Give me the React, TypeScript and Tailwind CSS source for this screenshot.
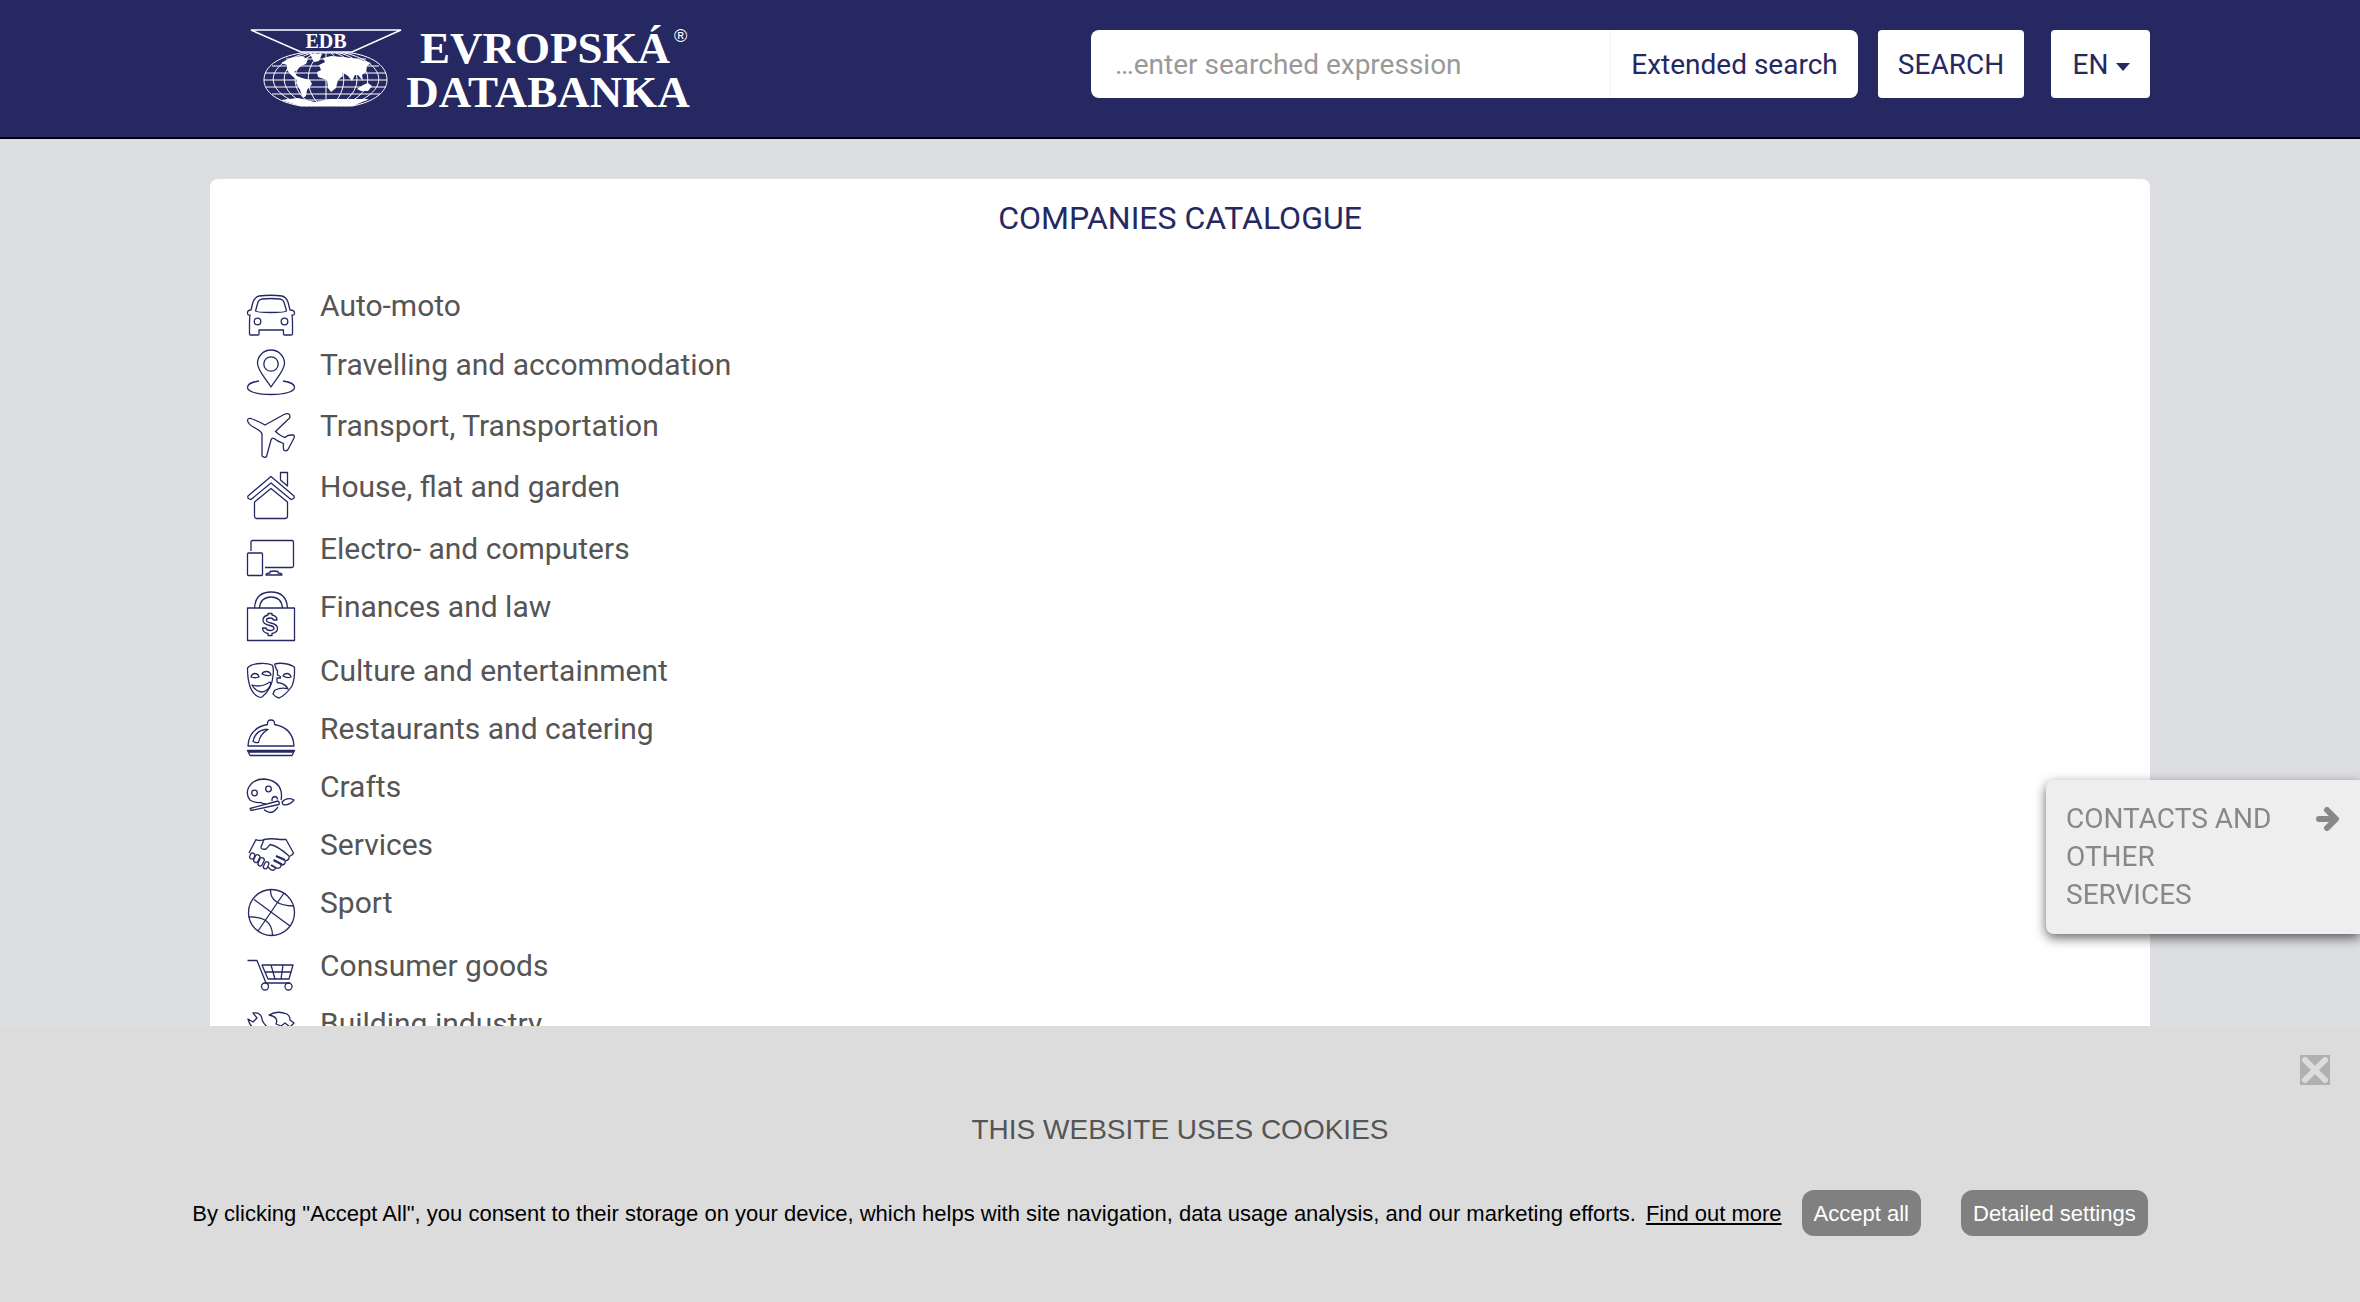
import React from 'react';

type Row = { label: string; height: string; icon: React.ReactNode };

const rows: Row[] = [
  {
    label: 'Auto-moto',
    height: 'h-[59px]',
    icon: (
      <>
        <path d="M4 21 L6 13 Q8 8 12 7 Q24 5.500 35 7 Q39 8 41 13 L43 21 Q47.500 21 47.500 24 Q47.500 26.500 45 26 Q45.500 29 45.500 33 V45 Q45.500 46 44 46 H37.500 Q36.500 46 36.500 45 V41 H12 V45 Q12 46 11 46 H3.500 Q2.500 46 2.500 45 V33 Q2.500 29 3 26 Q0.500 26.500 0.500 24 Q0.500 21 4 21 Z" />
        <path d="M8.500 22 L11 13 Q12 10.500 15 10 Q24 9 33 10 Q36 10.500 37 13 L39.500 22 Q38.500 23.500 24 23.500 Q9.500 23.500 8.500 22 Z" />
        <circle cx="10.500" cy="32.500" r="3.300" />
        <circle cx="37.500" cy="32.500" r="3.300" />
      </>
    ),
  },
  {
    label: 'Travelling and accommodation',
    height: 'h-[61px]',
    icon: (
      <>
        <path d="M24 39 C18 30 10.500 22 10.500 15.500 A13.500 13.500 0 0 1 37.500 15.500 C37.500 22 30 30 24 39 Z" />
        <circle cx="24" cy="16" r="7.200" />
        <path d="M12 33 C4 34 0.500 37 0.500 39.500 C0.500 43.500 10 46.500 24 46.500 C38 46.500 47.500 43.500 47.500 39.500 C47.500 37 44 34 36 33" />
      </>
    ),
  },
  {
    label: 'Transport, Transportation',
    height: 'h-[61px]',
    icon: (
      <path d="M0.500 11.500 Q0.500 9 4 9.500 Q11 12 18 16 L37 5.500 Q43 3 43 8 Q43 9 41 10.500 L28.500 22.500 Q34 27.500 38 28.500 Q40 26.500 43 26 H46.500 Q48 27 47 29 L41 40.500 Q39.500 42.500 37 41.500 Q36 39 36.500 34.500 Q30 32 27 29.500 Q25 28.500 24 31 L19.500 47.500 Q18 49.500 15 47 V25 Q14.500 22.500 9 19.500 Q1 15.500 0.500 11.500 Z" />
    ),
  },
  {
    label: 'House, flat and garden',
    height: 'h-[62px]',
    icon: (
      <>
        <path d="M24 6.500 L47 26 Q48 29 44 29.500 L24 13 L4 29.500 Q0 29 1 26 Z" />
        <path d="M7.500 32 L24 18.500 L40.500 32 V46 Q40.500 48.500 38 48.500 H9.500 Q7.500 48.500 7.500 46 Z" />
        <path d="M33.500 10 V2.500 H40.500 V16 Z" />
      </>
    ),
  },
  {
    label: 'Electro- and computers',
    height: 'h-[58px]',
    icon: (
      <>
        <path d="M4 19 V10 Q4 8.500 6 8.500 H45 Q46.500 8.500 46.500 10 V34 Q46.500 35.500 45 35.500 H18" />
        <rect x="0.500" y="21" width="15" height="22.500" rx="1" />
        <path d="M19 43 Q19 41 23 41 V39.500 Q27 38.500 31 39.500 V41 Q35 41 35 43 Z" />
      </>
    ),
  },
  {
    label: 'Finances and law',
    height: 'h-[64px]',
    icon: (
      <>
        <rect x="0.500" y="18" width="47" height="32.500" />
        <path d="M7.500 18 Q8.500 2 24 2 Q39.500 2 40.500 18 M12.500 18 Q13.500 7 24 7 Q34.500 7 35.500 18" />
        <path d="M21 25 V23.500 H25 V25 Q30 26 30 30 H26.500 Q26 28 23 28 Q19.500 28 19.500 30.500 Q19.500 32 24 33 Q30.500 34.500 30.500 38.500 Q30.500 42.500 25 43.500 V45.500 H21 V43.500 Q15.500 42.500 15.500 38 H19 Q19.500 40.500 23 40.500 Q27 40.500 27 38 Q27 36.500 23 35.500 Q16 34 16 30.500 Q16 26 21 25 Z" />
      </>
    ),
  },
  {
    label: 'Culture and entertainment',
    height: 'h-[58px]',
    icon: (
      <>
        <path d="M0.500 14 Q4 10 13 9.500 Q21 9 25 11 Q27 13 26 22 Q25 35 15 43 Q13 44 10 42 Q0.500 36 0.500 14 Z" />
        <path d="M27.500 10 Q33 8.500 40 10 Q46 11.500 47.500 13.500 Q48 25 45 32 Q39 41 32 44 Q28 43 26 40 Q27 37 28 36 Q35 33 41 35 Q38 29 30 28.500 M27.500 10 Q29 15 30.500 17 V21 Q34 22 33.500 24 H30 V28.500" />
        <path d="M4 23 Q5 19.500 8 19.500 Q11 19.500 12 23 Q8 24.500 4 23 Z M15 20 Q16 17.500 19.500 17.500 Q23 17.500 24 21 Q20 22.500 15 20 Z M36 22 Q37 19.500 40 19.500 Q43 19.500 44 23 Q40 24.500 36 22 Z" />
        <path d="M5 31 Q14 34 23 28 Q24.500 28.500 23 32 Q20 38 14 38 Q8 37 5 31 Z" />
      </>
    ),
  },
  {
    label: 'Restaurants and catering',
    height: 'h-[58px]',
    icon: (
      <>
        <path d="M1 34 Q2 16 20.500 12.500 Q20 8 24 8 Q28 8 27.500 12.500 Q46 16 47 34 Z" />
        <path d="M6 29.500 Q8 19 18 17.500 H21 Q13 22 11.500 30.500 Q9 31 6 29.500 Z" />
        <path d="M0.500 38.500 H47.500 L45 43.500 H3 Z M1 40 H47" />
      </>
    ),
  },
  {
    label: 'Crafts',
    height: 'h-[58px]',
    icon: (
      <>
        <path d="M14 32.500 Q7 33 3 30 Q-1 25 1 19 Q5 9 17 9 Q31 10 34 21 Q35 26 34 30 M14 32.500 Q16 34 19 34" />
        <circle cx="7.500" cy="23" r="2.800" />
        <circle cx="21.500" cy="19" r="2.800" />
        <path d="M25 31 Q24.500 27 28 26.500 Q30.500 27 30.500 29.500" />
        <path d="M3 38.500 L31 31 Q33 32 32 34.500 L4 40.500 Z M35 32 Q40 26.500 47 30 Q42 36 36 34.500 Z" />
        <path d="M17 39.500 Q23 45 28 40.500 L31 37" />
      </>
    ),
  },
  {
    label: 'Services',
    height: 'h-[58px]',
    icon: (
      <g transform="translate(0 1)">
        <path d="M2 24 L9 10.500 Q12 12.500 17 10.500 L14 18 Q14 21 19 20 Q22 17 23 15.500 Q31 17 42 27 M17 10.500 Q24 9 33 10.500 L39 10.500 L46.500 24 Q46 26 42.500 27.500" />
        <rect x="3" y="24" width="4.500" height="6" rx="2" transform="rotate(20 5 27)" />
        <rect x="7.500" y="25.500" width="4.500" height="8" rx="2" transform="rotate(25 9.500 29.500)" />
        <rect x="12" y="28.500" width="4.500" height="8.500" rx="2" transform="rotate(25 14 32.500)" />
        <rect x="17" y="32.500" width="4" height="7.500" rx="2" transform="rotate(25 19 36.500)" />
        <path d="M21 38 Q26 44 29 39 Q34 40 34 36 Q39 36 38 32 Q43 31 42 27" />
        <path strokeWidth="2" d="M29 27 L38 31 M26.500 31 L35 35.500 M24 36 L29 39" />
      </g>
    ),
  },
  {
    label: 'Sport',
    height: 'h-[63px]',
    icon: (
      <g transform="translate(0 1)">
        <circle cx="24.500" cy="25.500" r="23" />
        <path d="M7 12.500 L43 39 M37 6 L11 44 M23.500 2.500 Q23 18 46.500 19 M1.500 30 Q25 29 25.500 48" />
      </g>
    ),
  },
  {
    label: 'Consumer goods',
    height: 'h-[58px]',
    icon: (
      <>
        <path d="M0.500 11.500 H10 L19 34 H43" />
        <path d="M15 16 H46 L42 30 H21 Z M18 23 H44 M24 16 L28 30 M36 16 L34 30" />
        <circle cx="18" cy="37.500" r="3.500" />
        <circle cx="41.500" cy="37.500" r="3.500" />
      </>
    ),
  },
  {
    label: 'Building industry',
    height: 'h-[58px]',
    icon: (
      <>
        <path d="M1 12 L6 15 L10 11 L6 6 Q14 5 15 12 Q15 15 22 22 L35 36 L31 40 L14 22 Q4 24 1 12 Z" />
        <path d="M22 8 Q30 3 40 7 Q43 9 43 13 L47 16 L43 20 L38 16 L34 19 L29 17 Q32 10 22 8 Z M30 20 L12 42" />
      </>
    ),
  },
];

function Logo() {
  return (
    <a href="#home" aria-label="Evropská databanka" className="ml-10 mt-4 block text-white">
      <svg width="446" height="108" viewBox="0 0 446 108" fill="none" stroke="currentColor">
        <path d="M1 14 H151 L102 36 H51 Z" strokeWidth="1.500" />
        <g strokeWidth="1">
          <path d="M51 37 H102 C125 41 137 51 137 64 C137 76 124 86 102 90 H51 C27 86 14 76 14 64 C14 51 27 41 51 37 Z" />
          <path d="M36 43 H116 M22 50 H129 M15 57 H136 M14 64 H137 M16 71 H136 M22 78 H130 M36 84 H117 M76 37 V90" />
          <path d="M57 37 C12 48 12 78 57 90 M62 37 C25 48 25 78 62 90 M66 37 C38 48 38 78 66 90 M71 37 C54 50 54 76 71 90 M95 37 C140 48 140 78 95 90 M90 37 C127 48 127 78 90 90 M86 37 C114 48 114 78 86 90 M81 37 C98 50 98 76 81 90" />
        </g>
        <g fill="currentColor" stroke="none">
          <path d="M31 47 L40 42 L51 40 L58 43 L56 48 L51 50 L47 54 L44 56 L47 60 L52 62 L60 64 L62 68 L57 74 L56 80 L53 82 L50 74 L46 67 L47 64 L41 59 L37 54 L37 49 Z" />
          <path d="M60 38 L72 38 L69 45 L64 46 Z M71 54 L69 49 L75 46 L73 42 L81 40 L93 41 L108 43 L121 47 L117 50 L116 56 L112 59 L113 65 L108 59 L105 59 L102 65 L98 60 L92 56 L93 60 L88 64 L86 72 L81 76 L78 72 L77 64 L68 61 L67 56 Z" />
          <path d="M107 73 L113 69 L118 67 L122 70 L118 75 L111 75 Z M31 84 L48 82 L65 86 L80 83 L119 83 L103 90 H50 Z" />
        </g>
        <g fill="currentColor" stroke="none" fontFamily="'Liberation Serif', serif" fontWeight="700">
          <text x="76" y="31.500" fontSize="20" textAnchor="middle">EDB</text>
          <text x="295" y="47" fontSize="45" textAnchor="middle">EVROPSKÁ</text>
          <text x="298" y="91" fontSize="45" textAnchor="middle">DATABANKA</text>
          <text x="424" y="26" fontSize="18" fontWeight="400" fontFamily="'Liberation Sans', sans-serif">®</text>
        </g>
      </svg>
    </a>
  );
}

function Header() {
  return (
    <header className="border-b-2 border-black bg-[#262861]">
      <div className="mx-auto flex h-[137px] max-w-[1940px] items-start justify-between">
        <Logo />
        <form className="mt-[30px] flex h-[68px] text-[28px] text-[#262861]" onSubmit={(e) => e.preventDefault()}>
          <input
            type="text"
            aria-label="Searched expression"
            placeholder="…enter searched expression"
            className="w-[520px] rounded-l-lg border-r border-gray-100 bg-white px-6 pt-0.5 placeholder:text-[#999999]"
          />
          <button type="button" className="mr-5 w-[247px] rounded-r-lg bg-white pt-0.5">Extended search</button>
          <button type="submit" className="mr-[27px] w-[146px] rounded-sm bg-white pt-0.5">SEARCH</button>
          <button type="button" className="flex w-[99px] items-center justify-center gap-2 rounded-sm bg-white pl-0.5 pt-0.5">
            EN
            <svg width="14" height="8" viewBox="0 0 14 8" className="mt-1" fill="currentColor">
              <path d="M0 0 H14 L7 8 Z" />
            </svg>
          </button>
        </form>
      </div>
    </header>
  );
}

function CookieBar() {
  return (
    <section aria-label="Cookies" className="fixed inset-x-0 bottom-0 h-[276px] bg-[#dcdcdc] font-['Liberation_Sans',sans-serif]">
      <button type="button" aria-label="Close" className="absolute right-[30px] top-[29px] size-[30px] bg-[#b0b0b0] text-[#dcdcdc]">
        <svg width="30" height="30" viewBox="0 0 30 30" stroke="currentColor" strokeWidth="6" strokeLinecap="round">
          <path d="M5 5 L25 25 M25 5 L5 25" />
        </svg>
      </button>
      <h2 className="pt-[84px] text-center text-[28px] leading-10 text-[#555555]">THIS WEBSITE USES COOKIES</h2>
      <div className="mx-auto mt-10 flex max-w-[1976px] items-center justify-center whitespace-nowrap pr-5 text-[22px] text-black">
        <p>By clicking "Accept All", you consent to their storage on your device, which helps with site navigation, data usage analysis, and our marketing efforts.</p>
        <a href="#more" className="ml-[10px] underline">Find out more</a>
        <button type="button" className="ml-5 h-[46px] rounded-xl bg-[#808080] px-3 text-white">Accept all</button>
        <button type="button" className="ml-10 h-[46px] rounded-xl bg-[#808080] px-3 text-white">Detailed settings</button>
      </div>
    </section>
  );
}

export default function App() {
  return (
    <div className="h-screen overflow-hidden bg-[#dddee2] font-[Roboto,sans-serif]">
      <Header />
      <main className="mx-auto mt-10 max-w-[1940px] rounded-lg bg-white px-[37px] pb-10">
        <h1 className="pt-[19px] text-center text-[32px] leading-10 text-[#262861]">COMPANIES CATALOGUE</h1>
        <ul className="mt-12">
          {rows.map((row) => (
            <li key={row.label} className={row.height}>
              <a href="#category" className="flex items-start gap-[25px] text-[30px] leading-10 text-[#555555]">
                <svg width="48" height="52" viewBox="0 0 48 52" className="mt-[3px] shrink-0 overflow-visible text-[#262861]" fill="none" stroke="currentColor" strokeWidth="1.300" strokeLinejoin="round">
                  {row.icon}
                </svg>
                {row.label}
              </a>
            </li>
          ))}
        </ul>
      </main>
      <button type="button" className="fixed right-0 top-[780px] flex h-[154px] w-[314px] items-start justify-between rounded-l-lg bg-[#eeeeee] py-5 pl-5 pr-5 text-left text-[28px] leading-[38px] text-[#888888] shadow-[0_4px_12px_rgba(0,0,0,0.6)]">
        <span className="w-[220px]">CONTACTS AND OTHER SERVICES</span>
        <svg width="24" height="24" viewBox="0 0 24 24" className="mt-[7px]" fill="none" stroke="currentColor" strokeWidth="6" strokeLinecap="round" strokeLinejoin="round">
          <path d="M3 12 H19 M11 3 L20 12 L11 21" />
        </svg>
      </button>
      <CookieBar />
    </div>
  );
}
